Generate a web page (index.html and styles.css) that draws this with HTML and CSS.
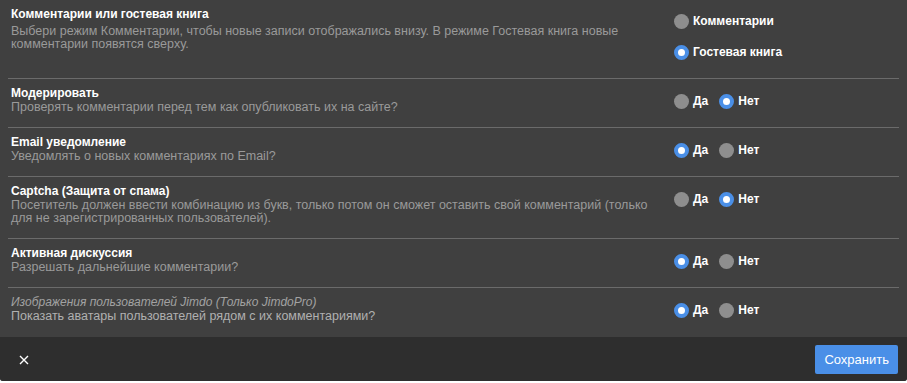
FILE: index.html
```html
<!DOCTYPE html>
<html lang="ru">
<head>
<meta charset="utf-8">
<title>Комментарии</title>
<link rel="stylesheet" href="styles.css">
</head>
<body>
<div class="panel">
  <div class="rows">
    <div class="row row-first">
      <div class="text">
        <div class="title">Комментарии или гостевая книга</div>
        <div class="desc">Выбери режим Комментарии, чтобы новые записи отображались внизу. В режиме Гостевая книга новые комментарии появятся сверху.</div>
      </div>
      <div class="options stack">
        <label class="opt"><span class="dot"></span>Комментарии</label>
        <label class="opt"><span class="dot on"></span>Гостевая книга</label>
      </div>
    </div>
    <div class="row">
      <div class="text">
        <div class="title">Модерировать</div>
        <div class="desc">Проверять комментарии перед тем как опубликовать их на сайте?</div>
      </div>
      <div class="options">
        <label class="opt"><span class="dot"></span>Да</label>
        <label class="opt"><span class="dot on"></span>Нет</label>
      </div>
    </div>
    <div class="row">
      <div class="text">
        <div class="title">Email уведомление</div>
        <div class="desc">Уведомлять о новых комментариях по Email?</div>
      </div>
      <div class="options">
        <label class="opt"><span class="dot on"></span>Да</label>
        <label class="opt"><span class="dot"></span>Нет</label>
      </div>
    </div>
    <div class="row">
      <div class="text">
        <div class="title">Captcha (Защита от спама)</div>
        <div class="desc">Посетитель должен ввести комбинацию из букв, только потом он сможет оставить свой комментарий (только для не зарегистрированных пользователей).</div>
      </div>
      <div class="options">
        <label class="opt"><span class="dot"></span>Да</label>
        <label class="opt"><span class="dot on"></span>Нет</label>
      </div>
    </div>
    <div class="row">
      <div class="text">
        <div class="title">Активная дискуссия</div>
        <div class="desc">Разрешать дальнейшие комментарии?</div>
      </div>
      <div class="options">
        <label class="opt"><span class="dot on"></span>Да</label>
        <label class="opt"><span class="dot"></span>Нет</label>
      </div>
    </div>
    <div class="row">
      <div class="text">
        <div class="title muted">Изображения пользователей Jimdo (Только JimdoPro)</div>
        <div class="desc light">Показать аватары пользователей рядом с их комментариями?</div>
      </div>
      <div class="options">
        <label class="opt"><span class="dot on"></span>Да</label>
        <label class="opt"><span class="dot"></span>Нет</label>
      </div>
    </div>
  </div>
  <div class="footer">
    <button class="close" aria-label="Закрыть">
      <svg width="10" height="10" viewBox="0 0 10 10"><path d="M1 1L9 9M9 1L1 9" stroke="#fff" stroke-width="1.4" fill="none"/></svg>
    </button>
    <button class="save">Сохранить</button>
  </div>
</div>
</body>
</html>
```
FILE: styles.css
```css
html, body {
  margin: 0;
  padding: 0;
  background: #ffffff;
}
body {
  font-family: "Liberation Sans", Arial, Helvetica, sans-serif;
  font-size: 12px;
  color: #ffffff;
}
.panel {
  width: 907px;
  height: 381px;
  background: #404040;
  display: flex;
  flex-direction: column;
  border-radius: 0 0 3px 3px;
  overflow: hidden;
}
.rows {
  margin: 0 8px;
  flex: 1;
}
.row {
  display: grid;
  grid-template-columns: 649px 1fr;
  column-gap: 14px;
  padding: 6px 0 13px 3px;
  border-bottom: 1px solid #6b6b6b;
}
.row:last-child {
  border-bottom: none;
}
.title {
  font-weight: bold;
  line-height: 16px;
  color: #ffffff;
}
.title.muted {
  font-weight: normal;
  font-style: italic;
  color: #a2a2a2;
}
.desc {
  font-size: 12.5px;
  line-height: 13px;
  color: #9a9a9a;
}
.desc.light {
  color: #b0b0b0;
}
.row-first .desc {
  margin-top: 3px;
}
.options {
  display: flex;
  align-items: center;
  gap: 11px;
  margin-top: 8px;
  height: 16px;
}
.options.stack {
  flex-direction: column;
  align-items: flex-start;
  gap: 15px;
  height: auto;
  margin-top: 7px;
  padding-bottom: 5px;
}
.opt {
  display: flex;
  align-items: center;
  height: 16px;
  font-weight: bold;
  color: #ffffff;
  line-height: 16px;
}
.dot {
  width: 15px;
  height: 15px;
  border-radius: 50%;
  background: #8e8e8e;
  margin-right: 4px;
  box-sizing: border-box;
  flex: none;
}
.dot.on {
  background: #ffffff;
  border: 4px solid #4a8fe7;
}
.footer {
  height: 44px;
  background: #2e2e2e;
  display: flex;
  align-items: center;
  justify-content: space-between;
  padding: 0 9px 0 14px;
}
.close {
  background: none;
  border: none;
  padding: 5px;
  margin: 1px 0 0 0;
  display: flex;
  cursor: pointer;
}
.save {
  height: 29px;
  padding: 0 9px;
  margin-top: 1px;
  border: none;
  border-radius: 2px;
  background: #4a8fe7;
  color: #ffffff;
  font-family: "Liberation Sans", Arial, Helvetica, sans-serif;
  font-size: 13px;
  cursor: pointer;
}
```
